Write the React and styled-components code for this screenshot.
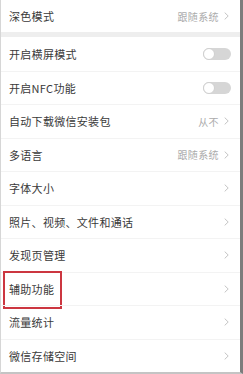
import * as React from "react";
import styled, { createGlobalStyle } from "styled-components";

const GlobalStyle = createGlobalStyle`
  html, body {
    margin: 0;
    padding: 0;
    background: #ffffff;
  }
  body {
    font-family: "Noto Sans CJK SC", "Noto Sans", sans-serif;
  }
`;

const Screen = styled.div`
  width: 243px;
  height: 374px;
  box-sizing: border-box;
  overflow: hidden;
  background: #ffffff;
  border-left: 1px solid #d6d6d6;
  border-right: 3px solid #7c7c7c;
  border-bottom: 2px solid #c4c4c4;
  display: flex;
  flex-direction: column;
`;

const Group = styled.div`
  display: flex;
  flex-direction: column;
  background: #ffffff;
`;

const Gap = styled.div`
  height: 5px;
  background: #eeeeee;
  flex-shrink: 0;
`;

const Row = styled.div`
  position: relative;
  height: ${(p) => p.$h || 33.5}px;
  flex-shrink: 0;
  box-sizing: border-box;
  display: flex;
  align-items: center;
  padding: 0 11px 0 8px;
  border-top: ${(p) => (p.$first ? "none" : "1px solid #f3f3f3")};
`;

const Label = styled.span`
  flex: 1;
  font-size: 11px;
  letter-spacing: 0.3px;
  color: #3a3a3a;
  white-space: nowrap;
`;

const Value = styled.span`
  font-size: 10px;
  color: #ababab;
  margin-right: 5px;
  letter-spacing: 0.4px;
`;

const Chevron = styled.svg`
  width: 5px;
  height: 8px;
  flex-shrink: 0;
`;

const Toggle = styled.div`
  width: 28px;
  height: 12px;
  border-radius: 6px;
  background: #d6d6d6;
  position: relative;
  margin-right: -2px;
  &::after {
    content: "";
    position: absolute;
    left: 0;
    top: 0;
    width: 12px;
    height: 12px;
    box-sizing: border-box;
    border-radius: 50%;
    background: #ffffff;
    border: 1px solid #cfcfcf;
  }
`;

const Highlight = styled.div`
  position: absolute;
  left: 2px;
  top: -2px;
  width: 59px;
  height: 38px;
  box-sizing: border-box;
  border: 2px solid #cc3640;
  pointer-events: none;
`;

const Arrow = () => (
  <Chevron viewBox="0 0 5 8">
    <path d="M0.7 0.6 L4.2 4 L0.7 7.4" fill="none" stroke="#bdbdbd" strokeWidth="0.9" />
  </Chevron>
);

const items = [
  { label: "开启横屏模式", toggle: true },
  { label: "开启NFC功能", toggle: true },
  { label: "自动下载微信安装包", value: "从不" },
  { label: "多语言", value: "跟随系统" },
  { label: "字体大小" },
  { label: "照片、视频、文件和通话" },
  { label: "发现页管理" },
  { label: "辅助功能", marked: true },
  { label: "流量统计" },
  { label: "微信存储空间" },
];

export default function App() {
  return (
    <>
      <GlobalStyle />
      <Screen>
        <Group>
          <Row $first $h={32}>
            <Label>深色模式</Label>
            <Value>跟随系统</Value>
            <Arrow />
          </Row>
        </Group>
        <Gap />
        <Group>
          {items.map((it, i) => (
            <Row key={it.label} $first={i === 0}>
              <Label>{it.label}</Label>
              {it.toggle ? (
                <Toggle />
              ) : (
                <>
                  {it.value && <Value>{it.value}</Value>}
                  <Arrow />
                </>
              )}
              {it.marked && <Highlight />}
            </Row>
          ))}
        </Group>
      </Screen>
    </>
  );
}
